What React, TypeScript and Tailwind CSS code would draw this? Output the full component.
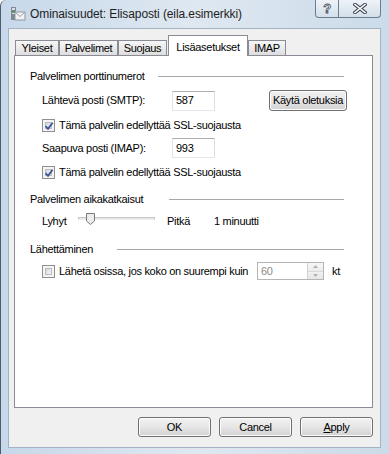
import React from 'react';

const ui = { fontFamily: '"Liberation Sans", Arial, sans-serif', letterSpacing: '-0.3px' };

function Check({ checked }: { checked: boolean }) {
  return (
    <span className="relative flex h-[13px] w-[13px] shrink-0 border border-[#8f8f8f] bg-[#f4f4f4]">
      <span className="absolute inset-[2px] border border-[#b9bdc3] bg-gradient-to-br from-[#d3d6db] to-[#f7f7f7]" />
      {checked && (
        <svg className="absolute left-[1px] top-[1px]" width="10" height="10" viewBox="0 0 10 10">
          <path d="M1.5 5.2 L4 7.8 L8.6 1.8" fill="none" stroke="#3d5494" strokeWidth="1.8" />
        </svg>
      )}
    </span>
  );
}

function Btn({ children, w, h }: { children: React.ReactNode; w: string; h: string }) {
  return (
    <div className={`${w} ${h} flex items-center justify-center rounded-[3px] border border-[#707070] bg-gradient-to-b from-[#f2f2f2] via-[#e6e6e6] to-[#d2d2d2] shadow-[inset_0_0_0_1px_#fcfcfc] text-[11px] text-black`}>
      {children}
    </div>
  );
}

function Heading({ label, w }: { label: string; w: string }) {
  return (
    <div className="flex h-[16px] items-center pl-[15px] pr-[28px]">
      <span className={`${w} shrink-0 whitespace-nowrap`}>{label}</span>
      <span className="h-px flex-1 bg-[#a8a8a8]" />
    </div>
  );
}

function Field({ value }: { value: string }) {
  return (
    <div className="flex h-[20px] w-[43px] items-center border border-[#abadb3] border-b-[#e3e9ef] border-l-[#e2e3ea] border-r-[#dbdfe6] bg-white pl-[3px]">
      {value}
    </div>
  );
}

const tabs = [
  { label: 'Yleiset', w: 'w-[44px]' },
  { label: 'Palvelimet', w: 'w-[59px]' },
  { label: 'Suojaus', w: 'w-[49px]' },
];

export default function App() {
  return (
    <div className="relative h-[454px] w-[389px] overflow-hidden rounded-tl-[6px] border-l border-[#4f5c6b] bg-gradient-to-r from-[#c6d8ea] via-[#dfe8f1] to-[#cbdbe9] text-[11px] text-black" style={ui}>
      {/* title bar */}
      <div className="flex h-[28px] items-center pl-[9px]">
        <svg width="16" height="16" viewBox="0 0 16 16" className="shrink-0">
          <rect x="1" y="1" width="5" height="13" fill="#7d8a95" />
          <rect x="2" y="2" width="3" height="2" fill="#d7dde2" />
          <rect x="2" y="5" width="3" height="1" fill="#3f9a3f" />
          <rect x="2" y="7" width="3" height="1" fill="#d7dde2" />
          <rect x="5" y="6" width="10" height="8" fill="#f2f2f2" stroke="#8d97a1" strokeWidth="1" />
          <path d="M5.5 6.5 L10 10.5 L14.5 6.5" fill="none" stroke="#9aa4ad" strokeWidth="1" />
        </svg>
        <span className="ml-[4px] whitespace-nowrap text-[12px] text-[#1e1e1e]" style={{ letterSpacing: '-0.1px' }}>
          Ominaisuudet: Elisaposti (eila.esimerkki)
        </span>
      </div>
      <div className="absolute right-[8px] top-0 flex">
        <div className="flex h-[18px] w-[24px] items-center justify-center rounded-bl-[4px] border border-t-0 border-[#6d7c8d] bg-gradient-to-b from-[#eef3f8] to-[#d4dfea]">
          <span className="text-[13px] font-bold text-white" style={{ WebkitTextStroke: '0.8px #44505d', fontFamily: '"Liberation Sans", sans-serif' }}>?</span>
        </div>
        <div className="flex h-[18px] w-[42px] items-center justify-center rounded-br-[4px] border border-l-0 border-t-0 border-[#6d7c8d] bg-gradient-to-b from-[#eef3f8] to-[#d4dfea]">
          <svg width="14" height="11" viewBox="0 0 14 11">
            <path d="M2 1.5 L12 9.5 M12 1.5 L2 9.5" stroke="#44505d" strokeWidth="3.6" strokeLinecap="square" />
            <path d="M2 1.5 L12 9.5 M12 1.5 L2 9.5" stroke="#ffffff" strokeWidth="1.6" strokeLinecap="square" />
          </svg>
        </div>
      </div>

      {/* client area */}
      <div className="ml-[7px] mr-[8px] h-[420px] border border-[#a3b3c4] bg-[#f0f0f0]">
        <div className="flex h-[26px] items-end pl-[6px]">
          {tabs.map((t) => (
            <div key={t.label} className={`${t.w} flex h-[15px] items-center justify-center border border-b-0 border-[#898c95] bg-gradient-to-b from-[#f6f6f6] to-[#dedede]`}>
              {t.label}
            </div>
          ))}
          <div className="relative z-10 -mb-px ml-[1px] flex h-[21px] w-[80px] items-start justify-center border border-b-0 border-[#898c95] bg-white pt-[3px]">
            Lisäasetukset
          </div>
          <div className="flex h-[15px] w-[38px] items-center justify-center border border-b-0 border-[#898c95] bg-gradient-to-b from-[#f6f6f6] to-[#dedede]">
            IMAP
          </div>
        </div>

        <div className="ml-[5px] mr-[7px] h-[353px] border border-[#898c95] bg-white pt-[12px]">
          <Heading label="Palvelimen porttinumerot" w="w-[128px]" />

          <div className="mt-[6px] flex h-[21px] items-center pl-[27px]">
            <span className="w-[130px] shrink-0 whitespace-nowrap">Lähtevä posti (SMTP):</span>
            <Field value="587" />
            <div className="ml-[54px]">
              <Btn w="w-[78px]" h="h-[21px]">Käytä oletuksia</Btn>
            </div>
          </div>

          <div className="mt-[6px] flex h-[16px] items-center pl-[27px]">
            <Check checked />
            <span className="ml-[4px] whitespace-nowrap">Tämä palvelin edellyttää SSL-suojausta</span>
          </div>

          <div className="mt-[5px] flex h-[20px] items-center pl-[27px]">
            <span className="w-[130px] shrink-0 whitespace-nowrap">Saapuva posti (IMAP):</span>
            <Field value="993" />
          </div>

          <div className="mt-[6px] flex h-[16px] items-center pl-[27px]">
            <Check checked />
            <span className="ml-[4px] whitespace-nowrap">Tämä palvelin edellyttää SSL-suojausta</span>
          </div>

          <div className="mt-[11px]">
            <Heading label="Palvelimen aikakatkaisut" w="w-[139px]" />
          </div>

          <div className="mt-[6px] flex h-[16px] items-center pl-[27px]">
            <span className="w-[36px] shrink-0">Lyhyt</span>
            <div className="relative h-[16px] w-[77px] shrink-0">
              <span className="absolute left-0 right-0 top-[4px] h-[3px] border border-[#c5c5c5] border-b-[#ececec] bg-[#e7eaea]" />
              <svg className="absolute left-[8px] top-0" width="9" height="12" viewBox="0 0 9 12">
                <path d="M0.5 0.5 H8.5 V8 L4.5 11.5 L0.5 8 Z" fill="#ececec" stroke="#7a7a7a" strokeWidth="1" />
              </svg>
            </div>
            <span className="ml-[12px] w-[47px] shrink-0">Pitkä</span>
            <span className="whitespace-nowrap">1 minuutti</span>
          </div>

          <div className="mt-[12px]">
            <Heading label="Lähettäminen" w="w-[87px]" />
          </div>

          <div className="mt-[5px] flex h-[18px] items-center pl-[27px]">
            <Check checked={false} />
            <span className="ml-[4px] w-[198px] shrink-0 whitespace-nowrap">Lähetä osissa, jos koko on suurempi kuin</span>
            <div className="flex h-[18px] w-[67px] shrink-0 border border-[#b5b5b5] bg-white">
              <span className="flex-1 pl-[3px] leading-[16px] text-[#8a8a8a]">60</span>
              <div className="flex w-[16px] flex-col border-l border-[#d2d2d2]">
                <div className="flex flex-1 items-center justify-center border-b border-[#d8d8d8] bg-gradient-to-b from-[#f7f7f7] to-[#ececec]">
                  <svg width="5" height="3" viewBox="0 0 5 3"><path d="M0 3 L2.5 0 L5 3 Z" fill="#b2b2b2" /></svg>
                </div>
                <div className="flex flex-1 items-center justify-center bg-gradient-to-b from-[#f1f1f1] to-[#e6e6e6]">
                  <svg width="5" height="3" viewBox="0 0 5 3"><path d="M0 0 L2.5 3 L5 0 Z" fill="#b2b2b2" /></svg>
                </div>
              </div>
            </div>
            <span className="ml-[8px]">kt</span>
          </div>
        </div>

        <div className="mt-[9px] flex justify-end gap-[8px] pr-[7px]">
          <Btn w="w-[73px]" h="h-[20px]">OK</Btn>
          <Btn w="w-[73px]" h="h-[20px]">Cancel</Btn>
          <Btn w="w-[73px]" h="h-[20px]">
            <span><span className="underline">A</span>pply</span>
          </Btn>
        </div>
      </div>
    </div>
  );
}
